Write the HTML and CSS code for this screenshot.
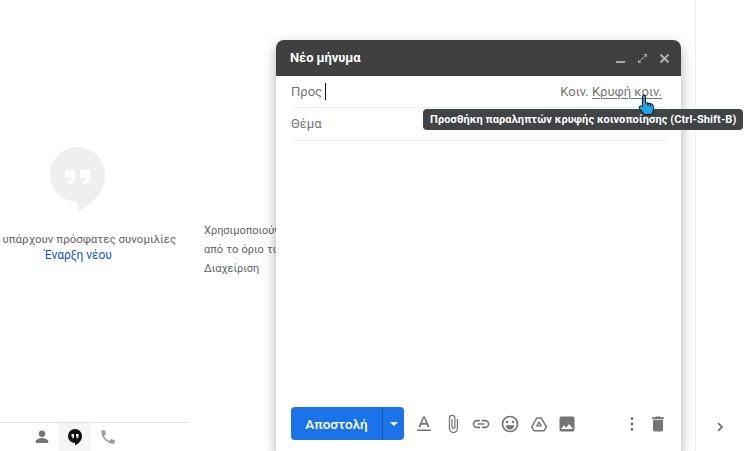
FILE: index.html
```html
<!DOCTYPE html>
<html lang="el">
<head>
<meta charset="utf-8">
<title>Νέο μήνυμα</title>
<link rel="stylesheet" href="styles.css">
</head>
<body>
<div class="page">
  <aside class="chat">
    <div class="chat-body">
      <svg class="bubble" width="56" height="66" viewBox="0 0 56 66">
        <path d="M27.500 0a27.500 27.500 0 0 0 0 55v10c10-6 27.500-16 27.500-37.500A27.500 27.500 0 0 0 27.500 0z" fill="#efefef"/>
        <path d="M15 23h10v8c0 4-3 6.500-7 6.500v-3.500c2 0 3-1 3-3h-6zM30 23h10v8c0 4-3 6.500-7 6.500v-3.500c2 0 3-1 3-3h-6z" fill="#fff"/>
      </svg>
      <p class="empty">Δεν υπάρχουν πρόσφατες συνομιλίες</p>
      <a class="start">Έναρξη νέου</a>
    </div>
    <nav class="tabs">
      <span class="tab">
        <svg width="16" height="16" viewBox="0 0 16 16"><circle cx="8" cy="4.700" r="3.200" fill="#757575"/><path d="M1.700 14v-1.500c0-2.400 4-3.600 6.300-3.600s6.300 1.200 6.300 3.600V14z" fill="#757575"/></svg>
      </span>
      <span class="tab tab-on">
        <svg width="16" height="18" viewBox="0 0 16 18"><path d="M8 1a7 7 0 0 0 0 14v2.500c3-1.500 7-4.500 7-9.500a7 7 0 0 0-7-7z" fill="#111"/><path d="M4.500 6h2.500v2.500c0 1-.8 2-2 2v-1c.5 0 .8-.4.800-1H4.500zM9 6h2.500v2.500c0 1-.8 2-2 2v-1c.5 0 .8-.4.800-1H9z" fill="#fff"/></svg>
      </span>
      <span class="tab">
        <svg width="18" height="18" viewBox="0 0 24 24"><path d="M6.600 10.800c1.400 2.800 3.800 5.100 6.600 6.600l2.200-2.200c.3-.3.700-.4 1-.2 1.100.4 2.300.6 3.600.6.600 0 1 .4 1 1V20c0 .6-.4 1-1 1C10.600 21 3 13.400 3 4c0-.6.400-1 1-1h3.500c.6 0 1 .4 1 1 0 1.300.2 2.500.6 3.600.1.300 0 .7-.2 1z" fill="#9e9e9e"/></svg>
      </span>
    </nav>
  </aside>
  <main class="main">
    <p class="note">Χρησιμοποιούνται<br>από το όριο των<br>Διαχείριση</p>
  </main>
  <aside class="rail">
    <svg class="chevron" width="10" height="12" viewBox="0 0 10 12"><path d="M3 2l4 4-4 4" fill="none" stroke="#5f6368" stroke-width="1.600"/></svg>
  </aside>
</div>

<section class="compose">
  <header class="compose-head">
    <span class="compose-title">Νέο μήνυμα</span>
    <span class="head-icons">
      <svg width="11" height="11" viewBox="0 0 11 11"><path d="M1 9h9" stroke="#a8a8a8" stroke-width="2"/></svg>
      <svg width="11" height="11" viewBox="0 0 11 11"><path d="M6.500 1H10v3.500zM1 6.500V10h3.500z" fill="#a8a8a8"/><path d="M3 8l5-5" stroke="#a8a8a8" stroke-width="1"/></svg>
      <svg width="11" height="11" viewBox="0 0 11 11"><path d="M1.500 1.500l8 8M9.500 1.500l-8 8" stroke="#b4b4b4" stroke-width="1.800"/></svg>
    </span>
  </header>
  <div class="field">
    <span class="label">Προς</span><span class="caret"></span>
    <span class="cc">Κοιν. <u>Κρυφή κοιν.</u></span>
  </div>
  <div class="field field-subject">
    <span class="label">Θέμα</span>
  </div>
  <div class="body-area"></div>
  <footer class="toolbar">
    <div class="send">
      <span class="send-main">Αποστολή</span>
      <span class="send-more"><svg width="8" height="4" viewBox="0 0 8 4"><path d="M0 0h8L4 4z" fill="#fff"/></svg></span>
    </div>
    <div class="tools">
      <svg width="20" height="20" viewBox="0 0 20 20"><path d="M9 2.500h2L15.500 13h-2l-.9-2.300H7.400L6.500 13h-2zM8 9h4l-2-5z" fill="#757575"/><path d="M3 15.500h14V17H3z" fill="#757575"/></svg>
      <svg width="20" height="20" viewBox="0 0 24 24"><path d="M16.500 6v11.500a4 4 0 0 1-8 0V5a2.500 2.500 0 0 1 5 0v10.500a1 1 0 0 1-2 0V6H10v9.500a2.500 2.500 0 0 0 5 0V5a4 4 0 0 0-8 0v12.500a5.500 5.500 0 0 0 11 0V6z" fill="#757575"/></svg>
      <svg width="20" height="20" viewBox="0 0 24 24"><path d="M3.900 12A3.100 3.100 0 0 1 7 8.900h4V7H7a5 5 0 0 0 0 10h4v-1.900H7A3.100 3.100 0 0 1 3.900 12zM8 13h8v-2H8zm9-6h-4v1.900h4a3.100 3.100 0 0 1 0 6.200h-4V17h4a5 5 0 0 0 0-10z" fill="#757575"/></svg>
      <svg width="20" height="20" viewBox="0 0 24 24"><path d="M12 2a10 10 0 1 0 0 20 10 10 0 0 0 0-20zm0 18a8 8 0 1 1 0-16 8 8 0 0 1 0 16z" fill="#757575"/><circle cx="8.500" cy="9.500" r="1.500" fill="#757575"/><circle cx="15.500" cy="9.500" r="1.500" fill="#757575"/><path d="M7 13.500h10a5 5 0 0 1-10 0z" fill="#757575"/></svg>
      <svg width="20" height="20" viewBox="-1.500 -1.500 27 27"><path d="M9 4h6l7 12-3 5H5l-3-5z" fill="none" stroke="#757575" stroke-width="2" stroke-linejoin="round"/><path d="M12 9.500l3 5H9z" fill="none" stroke="#757575" stroke-width="1.800" stroke-linejoin="round"/></svg>
      <svg width="20" height="20" viewBox="0 0 24 24"><path d="M21 19V5a2 2 0 0 0-2-2H5a2 2 0 0 0-2 2v14c0 1.100.9 2 2 2h14a2 2 0 0 0 2-2zM8.500 13.500l2.500 3 3.500-4.500 4.500 6H5z" fill="#757575"/></svg>
    </div>
    <div class="tools-end">
      <svg width="20" height="20" viewBox="0 0 20 20"><circle cx="10" cy="4.500" r="1.400" fill="#757575"/><circle cx="10" cy="10" r="1.400" fill="#757575"/><circle cx="10" cy="15.500" r="1.400" fill="#757575"/></svg>
      <svg width="20" height="20" viewBox="0 0 24 24"><path d="M6 19c0 1.100.9 2 2 2h8a2 2 0 0 0 2-2V7H6zM19 4h-3.500l-1-1h-5l-1 1H5v2h14z" fill="#757575"/></svg>
    </div>
  </footer>
</section>

<div class="tooltip">Προσθήκη παραληπτών κρυφής κοινοποίησης (Ctrl-Shift-B)</div>

<svg class="cursor" width="17" height="22" viewBox="0 0 17 22">
  <path d="M4.500 2.500a1.500 1.500 0 0 1 3 0V8.500l6 1.500c1.500.5 2 1 2 2.500v3c0 2-1 3.500-1.500 5H6.500L1.500 14.500c-1-1.500.5-3.500 2-2.500l1 1z" fill="#1ea7e8" stroke="#0b0b0b" stroke-width="1"/>
  <path d="M10 9v3M12.500 9.500v3" stroke="#0b0b0b" stroke-width="1"/>
</svg>
</body>
</html>
```
FILE: styles.css
```css
* { box-sizing: border-box; }
html, body { margin: 0; height: 100%; }
body {
  width: 744px;
  height: 451px;
  overflow: hidden;
  background: #fff;
  font-family: Roboto, "Noto Sans", sans-serif;
  position: relative;
}
.page { display: flex; height: 451px; }
.chat {
  width: 189px;
  flex: none;
  display: flex;
  flex-direction: column;
}
.chat-body {
  flex: 1;
  display: flex;
  flex-direction: column;
  align-items: center;
  padding-top: 147px;
  padding-right: 33px;
  overflow: hidden;
}
.bubble { flex: none; }
.empty {
  margin: 18px 0 0;
  font-size: 11.500px;
  line-height: 16px;
  color: #5f6368;
  white-space: nowrap;
  flex: none;
}
.start {
  font-size: 12px;
  line-height: 16px;
  color: #0b57c9;
  letter-spacing: -.05px;
}
.tabs {
  height: 29px;
  flex: none;
  border-top: 1px solid #e0e0e0;
  display: flex;
  justify-content: center;
  padding-right: 40px;
}
.tab {
  width: 33px;
  display: flex;
  align-items: center;
  justify-content: center;
}
.tab-on { background: #f5f5f5; }
.main {
  flex: 1;
  padding: 221px 0 0 15px;
  min-width: 0;
}
.note {
  margin: 0;
  font-size: 11px;
  line-height: 19px;
  color: #5f6368;
  white-space: nowrap;
  word-spacing: .5px;
}
.rail {
  width: 49px;
  flex: none;
  border-left: 1px solid #eeeeee;
  display: flex;
  align-items: flex-end;
  justify-content: center;
  padding-bottom: 18px;
}

.compose {
  position: absolute;
  left: 276px;
  top: 40px;
  width: 405px;
  height: 411px;
  background: #fff;
  border-radius: 8px 8px 0 0;
  box-shadow: 0 8px 10px 1px rgba(0,0,0,.14), 0 3px 14px 2px rgba(0,0,0,.12), 0 5px 5px -3px rgba(0,0,0,.2);
  display: flex;
  flex-direction: column;
}
.compose-head {
  height: 36px;
  flex: none;
  background: #404040;
  border-radius: 8px 8px 0 0;
  display: flex;
  align-items: center;
  justify-content: space-between;
  padding: 0 11px 2px 14px;
}
.compose-title { color: #fff; font-size: 13px; font-weight: 700; letter-spacing: -.1px; }
.head-icons { display: flex; gap: 11px; margin-top: 2px; }
.head-icons svg { display: block; }
.field {
  height: 32px;
  margin: 0 14px 0 15px;
  border-bottom: 1px solid #eeeeee;
  display: flex;
  align-items: center;
  font-size: 13px;
  color: #757575;
}
.field-subject { height: 33px; padding-bottom: 2px; }
.label { color: #757575; }
.caret { width: 1px; height: 17px; background: #111; margin-left: 3px; }
.cc { margin-left: auto; margin-right: 5px; font-size: 13px; white-space: pre; }
.cc u { text-underline-offset: 2px; }
.body-area { flex: 1; }
.toolbar {
  height: 43px;
  flex: none;
  margin-bottom: 6px;
  display: flex;
  align-items: center;
  padding: 0 13px 0 15px;
}
.send {
  width: 113px;
  height: 33px;
  background: #1a73e8;
  border-radius: 4px;
  display: flex;
  color: #fff;
}
.send-main {
  width: 92px;
  display: flex;
  align-items: center;
  justify-content: center;
  font-size: 13.500px;
  font-weight: 500;
  border-right: 1px solid #1558b0;
}
.send-more { flex: 1; display: flex; align-items: center; justify-content: center; }
.tools { display: flex; gap: 8.700px; margin-left: 10px; }
.tools-end { display: flex; gap: 6px; margin-left: auto; }
.tools svg, .tools-end svg { display: block; }

.tooltip {
  position: absolute;
  left: 423px;
  top: 109px;
  width: 320px;
  height: 21px;
  background: #404447;
  border-radius: 4px;
  color: #fff;
  font-size: 11px;
  letter-spacing: .1px;
  font-weight: 700;
  line-height: 21px;
  padding-left: 7px;
  white-space: nowrap;
}
.cursor { position: absolute; left: 638px; top: 94px; }
```
